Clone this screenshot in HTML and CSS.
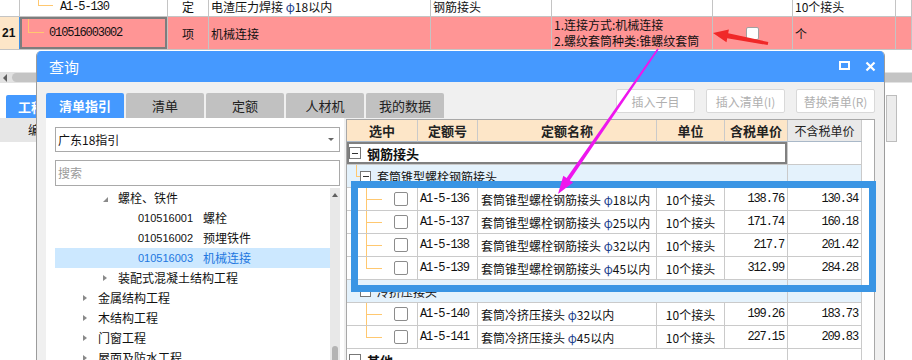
FILE: index.html
```html
<!DOCTYPE html>
<html lang="zh-CN">
<head>
<meta charset="utf-8">
<title>查询</title>
<link rel="stylesheet" href="styles.css">
</head>
<body>
<div class="sheet">
  <div class="sheet-row row-a">
    <div class="sc sc-num"></div>
    <div class="sc sc-code"><span class="mono">A1-5-130</span></div>
    <div class="sc sc-type">定</div>
    <div class="sc sc-name"><span>电渣压力焊接 <span class="phi">φ</span>18以内</span></div>
    <div class="sc sc-feat">钢筋接头</div>
    <div class="sc sc-desc"></div>
    <div class="sc sc-chk"></div>
    <div class="sc sc-unit">10个接头</div>
    <div class="sc sc-end"></div>
  </div>
  <div class="sheet-row row-b">
    <div class="sc sc-num">21</div>
    <div class="sc sc-code"><span class="mono">010516003002</span></div>
    <div class="sc sc-type">项</div>
    <div class="sc sc-name">机械连接</div>
    <div class="sc sc-feat"></div>
    <div class="sc sc-desc"><div class="desc-lines">1.连接方式:机械连接<br>2.螺纹套筒种类:锥螺纹套筒</div></div>
    <div class="sc sc-chk"><span class="cb-top"></span></div>
    <div class="sc sc-unit">个</div>
    <div class="sc sc-end"></div>
  </div>
  <div class="hscroll"><span class="hs-arrow"></span><span class="hs-thumb"></span></div>
  <div class="bg-tabs"><span class="bg-tab">工程</span><span class="bg-side"></span></div>
  <div class="bg-head"><span class="bh-main">编</span><span class="bg-side"></span></div>
</div>

<div class="dialog">
  <div class="titlebar">
    <span class="title">查询</span>
    <span class="tb-icons">
      <svg class="ic-max" width="11" height="9" viewBox="0 0 11 9"><rect x="1" y="1" width="9" height="7" fill="none" stroke="#fff" stroke-width="2"/></svg>
      <svg class="ic-close" width="11" height="11" viewBox="0 0 11 11"><path d="M1.5 1.5 L9.5 9.5 M9.5 1.5 L1.5 9.5" stroke="#fff" stroke-width="2.2" fill="none"/></svg>
    </span>
  </div>
  <div class="dbody">
    <div class="toolbar">
      <div class="tabs">
        <span class="tab active">清单指引</span>
        <span class="tab">清单</span>
        <span class="tab">定额</span>
        <span class="tab">人材机</span>
        <span class="tab">我的数据</span>
      </div>
      <div class="btns">
        <button class="btn">插入子目</button>
        <button class="btn">插入清单(I)</button>
        <button class="btn">替换清单(R)</button>
      </div>
    </div>
    <div class="panes">
      <div class="left">
        <div class="select"><span>广东18指引</span><span class="caret"></span></div>
        <div class="search">搜索</div>
        <div class="tree-wrap">
          <div class="tree">
            <div class="node l2"><i class="tri-open"></i>螺栓、铁件</div>
            <div class="node l3"><span class="tcode">010516001</span>螺栓</div>
            <div class="node l3"><span class="tcode">010516002</span>预埋铁件</div>
            <div class="node l3 hl"><span class="tcode">010516003</span>机械连接</div>
            <div class="node l2"><i class="tri"></i>装配式混凝土结构工程</div>
            <div class="node l1"><i class="tri"></i>金属结构工程</div>
            <div class="node l1"><i class="tri"></i>木结构工程</div>
            <div class="node l1"><i class="tri"></i>门窗工程</div>
            <div class="node l1"><i class="tri"></i>屋面及防水工程</div>
          </div>
          <div class="vscroll"><span class="vs-up"></span><span class="vs-thumb"></span></div>
        </div>
      </div>
      <div class="right">
        <div class="trow thead">
          <div class="th">选中</div>
          <div class="th">定额号</div>
          <div class="th">定额名称</div>
          <div class="th">单位</div>
          <div class="th">含税单价</div>
          <div class="th th-plain">不含税单价</div>
        </div>
        <div class="trow">
          <div class="td span5 grp-cell sel"><span class="box"></span><b>钢筋接头</b></div>
          <div class="td"></div>
        </div>
        <div class="trow sub">
          <div class="td span5 sub-cell"><span class="box"></span>套筒锥型螺栓钢筋接头</div>
          <div class="td"></div>
        </div>
        <div class="trow">
          <div class="td pick"><span class="cb"></span></div>
          <div class="td code mono">A1-5-136</div>
          <div class="td name"><span>套筒锥型螺栓钢筋接头 <span class="phi">φ</span>18以内</span></div>
          <div class="td unit">10个接头</div>
          <div class="td num mono">138.76</div>
          <div class="td num mono">130.34</div>
        </div>
        <div class="trow">
          <div class="td pick"><span class="cb"></span></div>
          <div class="td code mono">A1-5-137</div>
          <div class="td name"><span>套筒锥型螺栓钢筋接头 <span class="phi">φ</span>25以内</span></div>
          <div class="td unit">10个接头</div>
          <div class="td num mono">171.74</div>
          <div class="td num mono">160.18</div>
        </div>
        <div class="trow">
          <div class="td pick"><span class="cb"></span></div>
          <div class="td code mono">A1-5-138</div>
          <div class="td name"><span>套筒锥型螺栓钢筋接头 <span class="phi">φ</span>32以内</span></div>
          <div class="td unit">10个接头</div>
          <div class="td num mono">217.7</div>
          <div class="td num mono">201.42</div>
        </div>
        <div class="trow">
          <div class="td pick last"><span class="cb"></span></div>
          <div class="td code mono">A1-5-139</div>
          <div class="td name"><span>套筒锥型螺栓钢筋接头 <span class="phi">φ</span>45以内</span></div>
          <div class="td unit">10个接头</div>
          <div class="td num mono">312.99</div>
          <div class="td num mono">284.28</div>
        </div>
        <div class="trow sub">
          <div class="td span5 sub-cell"><span class="box"></span>冷挤压接头</div>
          <div class="td"></div>
        </div>
        <div class="trow">
          <div class="td pick"><span class="cb"></span></div>
          <div class="td code mono">A1-5-140</div>
          <div class="td name"><span>套筒冷挤压接头 <span class="phi">φ</span>32以内</span></div>
          <div class="td unit">10个接头</div>
          <div class="td num mono">199.26</div>
          <div class="td num mono">183.73</div>
        </div>
        <div class="trow">
          <div class="td pick last"><span class="cb"></span></div>
          <div class="td code mono">A1-5-141</div>
          <div class="td name"><span>套筒冷挤压接头 <span class="phi">φ</span>45以内</span></div>
          <div class="td unit">10个接头</div>
          <div class="td num mono">227.15</div>
          <div class="td num mono">209.83</div>
        </div>
        <div class="trow">
          <div class="td span5 grp-cell"><span class="box"></span><b>其他</b></div>
          <div class="td"></div>
        </div>
      </div>
    </div>
  </div>
</div>

<svg class="overlay" width="912" height="360" viewBox="0 0 912 360">
  <rect x="354.5" y="184.5" width="518" height="104" fill="none" stroke="#3a95e4" stroke-width="7"/>
  <polygon fill="#ee16ee" points="658.7,49.5 569.8,180.3 573.1,182.6 558,194 563.3,175.8 566.6,178.1 657.3,48.5"/>
  <polygon fill="#f02828" points="768.3,42.0 728.2,33.3 728.9,29.4 713,33 726.5,42.2 727.2,38.3 767.7,45.0"/>
</svg>
</body>
</html>
```

FILE: styles.css
```css
* { box-sizing: border-box; margin: 0; padding: 0; }
html, body { width: 912px; height: 360px; overflow: hidden; background: #fff; }
body {
  position: relative;
  font-family: "Noto Sans CJK SC", "Noto Sans", sans-serif;
  font-size: 12px;
  color: #111;
}
.mono { font-family: "Liberation Mono", "DejaVu Sans Mono", monospace; font-size: 12px; letter-spacing: -1.1px; }
.phi { color: #1d3f8f; }

/* ---------- background sheet ---------- */
.sheet-row {
  display: grid;
  grid-template-columns: 20px 148px 41px 222px 121px 161px 80px 103px 1fr;
  border-bottom: 1px solid #c4c4c4;
}
.row-a { height: 17px; line-height: 14px; }
.row-b { height: 33px; background: #ff9595; }
.sc {
  border-right: 1px solid #c4c4c4;
  display: flex;
  align-items: center;
  padding-left: 2px;
  white-space: nowrap;
  overflow: hidden;
}
.row-a .sc { align-items: flex-start; overflow: visible; }
.sc-num { padding-left: 0; }
.row-b .sc-num {
  background: #fde6c8;
  border-right: 1px solid #3d8fe6;
  font-family: "Liberation Sans", sans-serif;
  font-weight: bold;
  font-size: 12px;
  padding-left: 2px;
}
.sc-type { justify-content: center; padding-left: 0; }
.row-a .sc-code {
  padding-left: 40px;
  background:
    linear-gradient(#ffc870, #ffc870) 18px 0 / 1px 6px no-repeat,
    linear-gradient(#ffc870, #ffc870) 18px 5px / 15px 1px no-repeat;
}
.row-b .sc-code {
  padding-left: 29px;
  background:
    linear-gradient(#ffc870, #ffc870) 8px 0 / 1px 16px no-repeat,
    linear-gradient(#ffc870, #ffc870) 8px 15px / 16px 1px no-repeat;
  background-color: #ff9595;
  box-shadow: inset 0 0 0 2px #7d7d7d;
}
.desc-lines { line-height: 16px; }
.sc-chk { justify-content: center; padding-left: 0; }
.cb-top { width: 13px; height: 13px; background: #fff; border: 1px solid #a0a0a0; border-radius: 2px; }

.hscroll { margin-top: 22px; height: 11px; background: #e2e2e2; display: flex; align-items: center; }
.hs-arrow {
  width: 0; height: 0; margin-left: 3px;
  border-right: 4px solid #606060;
  border-top: 4px solid transparent;
  border-bottom: 4px solid transparent;
}
.hs-thumb { flex: 1; height: 9px; margin-left: 5px; background: #c4c4c4; border-radius: 5px 0 0 5px; }
.bg-tabs { margin-top: 12px; height: 23px; display: flex; }
.bg-tab {
  margin-left: 6px; width: 30px;
  background: #4499ff; color: #fff;
  font-weight: bold; font-size: 13px;
  padding-left: 12px; line-height: 23px;
  border-radius: 2px 0 0 0;
  white-space: nowrap; overflow: hidden;
}
.bg-side { margin-left: auto; margin-right: 15px; width: 11px; background: #ececec; border: 1px solid #bdbdbd; }
.bg-tabs .bg-side { border-bottom: none; }
.bg-head { height: 24px; display: flex; }
.bh-main { width: 36px; background: #e6e6e6; padding-left: 28px; line-height: 24px; font-size: 12px; overflow: hidden; white-space: nowrap; }
.bg-head .bg-side { border-top: none; }

/* ---------- dialog ---------- */
.dialog {
  position: absolute; left: 36px; top: 51px;
  width: 849px; height: 320px;
  border: 1px solid #9c9c9c; border-top: none;
  border-radius: 5px 5px 0 0;
  background: #f0f0f0;
  display: flex; flex-direction: column;
  overflow: hidden;
}
.titlebar {
  height: 31px; flex: none;
  background: #4599ff; color: #fff;
  display: flex; align-items: center;
  padding: 0 8px 0 12px;
}
.title { font-size: 15px; line-height: 20px; }
.tb-icons { margin-left: auto; display: flex; align-items: center; gap: 15px; }
.ic-max { display: block; margin-top: -2px; }
.ic-close { display: block; }

.dbody { flex: 1; display: flex; flex-direction: column; padding: 0 9px; min-height: 0; }
.toolbar { height: 36px; flex: none; display: flex; align-items: flex-start; }
.tabs { margin-top: 11px; display: flex; gap: 2px; }
.tab {
  width: 78px; height: 25px; line-height: 25px;
  text-align: center;
  background: #c1c1c1; color: #222;
  font-size: 13px;
  border-radius: 2px 2px 0 0;
}
.tab.active { background: #4499ff; color: #fff; font-weight: bold; }
.btns { margin-left: auto; margin-top: 7px; display: flex; gap: 11px; }
.btn {
  width: 79px; height: 24px;
  border: 1px solid #d9d9d9; border-radius: 2px;
  background: #fff; color: #b0b0b0;
  font-family: "Noto Sans CJK SC", "Noto Sans", sans-serif;
  font-size: 12px;
}

.panes { flex: 1; display: flex; gap: 2px; min-height: 0; }
.left {
  width: 298px; flex: none;
  background: #fff;
  padding: 9px 4px 0 9px;
  display: flex; flex-direction: column;
}
.select {
  height: 25px; flex: none;
  border: 1px solid #a9a9a9;
  display: flex; align-items: center;
  padding-left: 2px;
}
.caret {
  margin-left: auto; margin-right: 5px;
  width: 0; height: 0;
  border-top: 3px solid #666;
  border-left: 3px solid transparent;
  border-right: 3px solid transparent;
}
.search {
  margin-top: 8px; height: 26px; flex: none;
  border: 1px solid #a9a9a9;
  color: #9a9a9a;
  padding-left: 2px; line-height: 24px;
}
.tree-wrap { margin-top: 2px; flex: 1; display: flex; min-height: 0; }
.tree { flex: 1; overflow: hidden; }
.node { height: 20px; line-height: 20px; display: flex; align-items: center; white-space: nowrap; }
.node.l1 { padding-left: 28px; }
.node.l2 { padding-left: 48px; }
.node.l3 { padding-left: 83px; }
.tri {
  width: 0; height: 0; margin-right: 11px;
  border-left: 4px solid #8a8a8a;
  border-top: 3.5px solid transparent;
  border-bottom: 3.5px solid transparent;
}
.tri-open {
  width: 0; height: 0; margin-right: 10px; margin-top: 2px;
  border-bottom: 5px solid #8a8a8a;
  border-left: 5px solid transparent;
}
.tcode { width: 65px; font-family: "Liberation Sans", sans-serif; font-size: 11px; }
.node.hl { background: #cce8ff; color: #2277e0; }
.vscroll { width: 10px; flex: none; background: #e8e8e8; display: flex; flex-direction: column; align-items: center; }
.vs-up {
  margin-top: 5px; width: 0; height: 0;
  border-bottom: 4px solid #606060;
  border-left: 3.5px solid transparent;
  border-right: 3.5px solid transparent;
}
.vs-thumb { margin-top: auto; width: 6px; height: 24px; background: #b4b4b4; border-radius: 3px 3px 0 0; }

.right {
  flex: 1; margin-top: 1px;
  background: #fff;
  border: 1px solid #a8a8a8;
  overflow: hidden;
}
.trow { display: grid; grid-template-columns: 71px 60px 179px 68px 63px 74px; height: 23px; }
.thead { height: 22px; }
.th {
  background: #fde6c8;
  border-right: 1px solid #cacaca;
  border-bottom: 1px solid #a9b8c8;
  display: flex; align-items: center; justify-content: center;
  font-weight: bold; font-size: 13px; color: #222;
}
.th-plain { background: #e9e9e9; font-weight: normal; font-size: 12px; }
.td {
  border-right: 1px solid #cacaca;
  border-bottom: 1px solid #cacaca;
  display: flex; align-items: center;
  white-space: nowrap; overflow: hidden;
}
.span5 { grid-column: span 5; }
.box {
  width: 12px; height: 12px; flex: none;
  border: 1px solid #777;
  background: linear-gradient(#333, #333) center / 6px 1px no-repeat, #fff;
}
.grp-cell { padding-left: 2px; font-size: 13px; }
.grp-cell b { margin-left: 6px; }
.grp-cell.sel { box-shadow: inset 0 0 0 2px #808080; }
.sub .td { background: #e4f2fc; }
.sub .sub-cell {
  padding-left: 13px;
  background:
    linear-gradient(#ffc870, #ffc870) 9px 0 / 1px 50% no-repeat,
    linear-gradient(#ffc870, #ffc870) 9px 50% / 4px 1px no-repeat,
    #e4f2fc;
}
.sub-cell .box { width: 11px; height: 11px; margin-right: 6px; }
.pick {
  padding-left: 47px;
  background:
    linear-gradient(#ffc870, #ffc870) 19px 0 / 1px 100% no-repeat,
    linear-gradient(#ffc870, #ffc870) 19px 50% / 16px 1px no-repeat;
}
.pick.last {
  background:
    linear-gradient(#ffc870, #ffc870) 19px 0 / 1px 50% no-repeat,
    linear-gradient(#ffc870, #ffc870) 19px 50% / 16px 1px no-repeat;
}
.cb { width: 14px; height: 14px; border: 1px solid #8c8c8c; border-radius: 2px; background: #fff; }
.code { padding-left: 2px; }
.name { padding-left: 3px; }
.unit { justify-content: center; }
.num { justify-content: flex-end; padding-right: 3px; }

.overlay { position: absolute; left: 0; top: 0; pointer-events: none; }
```
